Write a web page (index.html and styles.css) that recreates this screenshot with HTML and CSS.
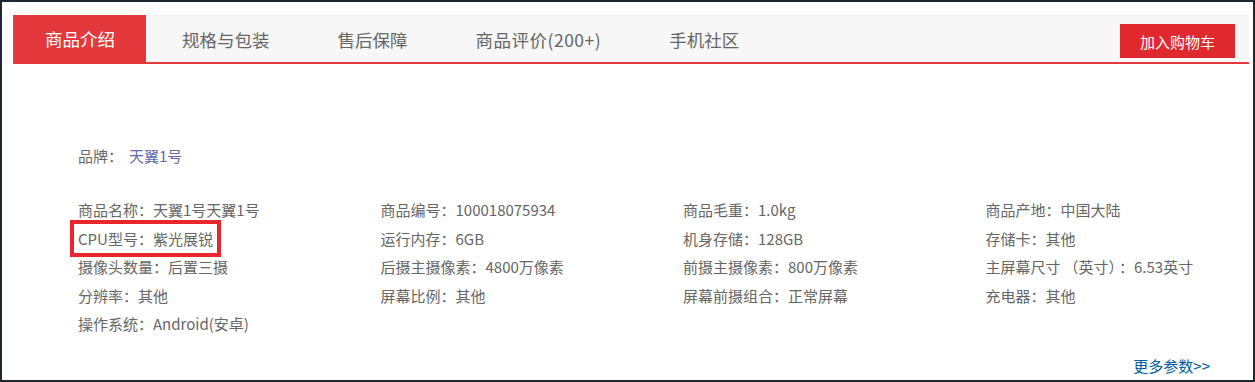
FILE: index.html
```html
<!DOCTYPE html>
<html lang="zh-CN">
<head>
<meta charset="utf-8">
<title>商品介绍</title>
<link rel="stylesheet" href="styles.css">
</head>
<body>
<div class="frame">
  <div class="tabbar">
    <ul class="tabs">
      <li class="tab active">商品介绍</li>
      <li class="tab">规格与包装</li>
      <li class="tab">售后保障</li>
      <li class="tab tab-wide">商品评价(200+)</li>
      <li class="tab">手机社区</li>
    </ul>
    <a class="cart-btn">加入购物车</a>
  </div>
  <div class="content">
    <div class="brand">品牌：<a class="brand-link">天翼1号</a></div>
    <ul class="specs">
      <li>商品名称：天翼1号天翼1号</li>
      <li>商品编号：100018075934</li>
      <li>商品毛重：1.0kg</li>
      <li>商品产地：中国大陆</li>
      <li><span class="mark">CPU型号：紫光展锐</span></li>
      <li>运行内存：6GB</li>
      <li>机身存储：128GB</li>
      <li>存储卡：其他</li>
      <li>摄像头数量：后置三摄</li>
      <li>后摄主摄像素：4800万像素</li>
      <li>前摄主摄像素：800万像素</li>
      <li>主屏幕尺寸<span class="paren">（英寸）</span>：6.53英寸</li>
      <li>分辨率：其他</li>
      <li>屏幕比例：其他</li>
      <li>屏幕前摄组合：正常屏幕</li>
      <li>充电器：其他</li>
      <li>操作系统：Android(安卓)</li>
    </ul>
    <div class="more"><a class="more-link">更多参数&gt;&gt;</a></div>
  </div>
</div>
</body>
</html>
```
FILE: styles.css
```css
* { box-sizing: border-box; }
html, body { margin: 0; padding: 0; background: #fff; }
body {
  font-family: "Noto Sans CJK SC", "Noto Sans", sans-serif;
  color: #666;
}
.frame {
  width: 1255px;
  height: 382px;
  border: 2px solid #1d2830;
  padding: 13px 4px 0 11px;
  background: #fff;
  overflow: hidden;
}
.tabbar {
  display: flex;
  align-items: center;
  justify-content: space-between;
  height: 49px;
  background: #f7f7f7;
  border-top: 1px solid #eeeeee;
  border-bottom: 2px solid #e4393c;
}
.tabs {
  display: flex;
  list-style: none;
  margin: 0;
  padding: 0;
  height: 100%;
}
.tab {
  display: flex;
  align-items: center;
  padding: 0 34px;
  font-size: 17.5px;
  color: #666;
  height: 100%;
}
.tab.active {
  background: #e4393c;
  color: #fff;
  padding: 0 31px 0 32px;
  margin-right: 2px;
  margin-top: -1px;
  height: calc(100% + 1px);
}
.tab-wide { letter-spacing: 0.5px; }
.cart-btn {
  display: flex;
  align-items: center;
  justify-content: center;
  width: 115px;
  height: 34px;
  margin-right: 14px;
  margin-top: 4px;
  background: #e0292e;
  color: #fff;
  font-size: 15px;
}
.content {
  padding: 82px 0 0 65px;
  font-size: 15px;
}
.brand {
  line-height: 20px;
  height: 20px;
}
.brand-link { color: #5e69ad; margin-left: 6px; }
.specs {
  list-style: none;
  margin: 30px 0 0 0;
  padding: 0;
  display: grid;
  grid-template-columns: repeat(4, 302.5px);
  grid-auto-rows: 28.5px;
  align-items: center;
}
.specs li { white-space: nowrap; line-height: 20px; }
.paren { margin: 0 3px; }
.mark {
  outline: 4px solid #e8262b;
  outline-offset: 4px;
}
.more {
  text-align: right;
  padding-right: 39px;
  margin-top: 17px;
  line-height: 20px;
}
.more-link { color: #005aa0; }
```
